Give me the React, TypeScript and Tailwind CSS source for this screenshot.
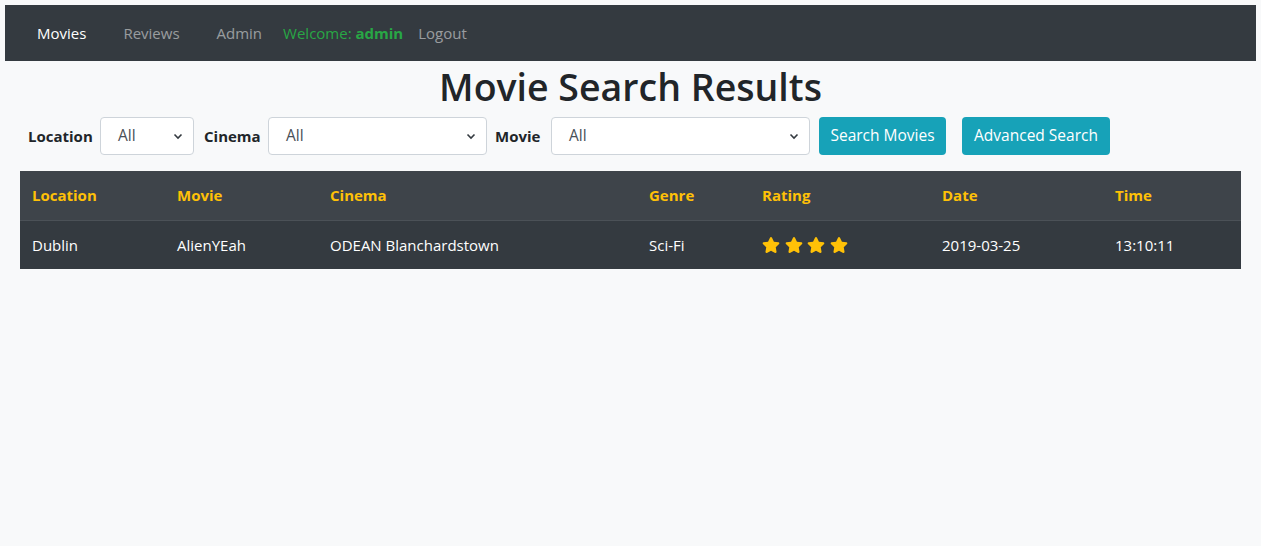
import React from "react";

const Star = () => (
  <svg width="18" height="18" viewBox="0 0 576 512" fill="#ffc107">
    <path d="M259.3 17.8L194 150.2 47.9 171.5c-26.2 3.8-36.7 36.1-17.7 54.6l105.7 103-25 145.5c-4.5 26.3 23.2 46 46.4 33.7L288 439.6l130.7 68.7c23.2 12.2 50.9-7.4 46.4-33.7l-25-145.5 105.7-103c19-18.5 8.5-50.8-17.7-54.6L382 150.2 316.7 17.8c-11.7-23.6-45.6-23.9-57.4 0z" />
  </svg>
);

const Select = ({ w }: { w: string }) => (
  <div className={`${w} h-[38px] shrink-0 bg-white border border-[#ced4da] rounded-[4px] flex items-center justify-between pl-[17px] pr-[10px] text-[#495057] text-[15.5px]`}>
    <span>All</span>
    <svg width="10" height="8" viewBox="0 0 10 8">
      <path d="M1.5 2.5 L5 6 L8.5 2.5" stroke="#343a40" strokeWidth="1.6" fill="none" />
    </svg>
  </div>
);

export default function App() {
  const cols = ["w-[145px]", "w-[153px]", "w-[319px]", "w-[113px]", "w-[180px]", "w-[173px]", "w-[137px]"];
  const heads = ["Location", "Movie", "Cinema", "Genre", "Rating", "Date", "Time"];
  return (
    <div className="min-h-[546px] bg-[#f8f9fa] pt-[5px] px-[5px] text-[#212529] font-['Open_Sans',sans-serif] text-[15px]">
      <nav className="h-[56px] bg-[#343a40] flex items-center pl-[32px] text-[15px] whitespace-nowrap">
        <span className="text-white">Movies</span>
        <span className="text-[rgba(255,255,255,0.5)] ml-[37px]">Reviews</span>
        <span className="text-[rgba(255,255,255,0.5)] ml-[37px]">Admin</span>
        <span className="text-[#28a745] ml-[21px]">
          Welcome: <b>admin</b>
        </span>
        <span className="text-[rgba(255,255,255,0.5)] ml-[15px]">Logout</span>
      </nav>
      <h1 className="text-center text-[37.5px] font-semibold leading-[45px] mt-[3px] mb-[8px]">Movie Search Results</h1>
      <div className="flex items-center pl-[23px] whitespace-nowrap">
        <label className="font-bold w-[65px]">Location</label>
        <div className="w-[7px]" />
        <Select w="w-[94px]" />
        <label className="font-bold ml-[10px] w-[56px]">Cinema</label>
        <div className="w-[8px]" />
        <Select w="w-[219px]" />
        <label className="font-bold ml-[8px] w-[47px]">Movie</label>
        <div className="w-[9px]" />
        <Select w="w-[259px]" />
        <button className="ml-[9px] h-[38px] bg-[#17a2b8] text-white rounded-[4px] w-[127px] shrink-0 text-[15.5px]">Search Movies</button>
        <button className="ml-[16px] h-[38px] bg-[#17a2b8] text-white rounded-[4px] w-[148px] shrink-0 text-[15.5px]">Advanced Search</button>
      </div>
      <div className="mx-[15px] mt-[16px]">
        <div className="flex bg-[#3e444a] border-b border-[#4b5157] h-[50px] items-center">
          {heads.map((h, i) => (
            <div key={h} className={`${cols[i]} px-[12px] font-bold text-[#ffc107]`}>{h}</div>
          ))}
        </div>
        <div className="flex bg-[#343a40] h-[48px] items-center text-white">
          <div className={`${cols[0]} px-[12px]`}>Dublin</div>
          <div className={`${cols[1]} px-[12px]`}>AlienYEah</div>
          <div className={`${cols[2]} px-[12px]`}>ODEAN Blanchardstown</div>
          <div className={`${cols[3]} px-[12px]`}>Sci-Fi</div>
          <div className={`${cols[4]} px-[12px] flex gap-[4.5px]`}>
            <Star />
            <Star />
            <Star />
            <Star />
          </div>
          <div className={`${cols[5]} px-[12px]`}>2019-03-25</div>
          <div className={`${cols[6]} px-[12px]`}>13:10:11</div>
        </div>
      </div>
    </div>
  );
}
